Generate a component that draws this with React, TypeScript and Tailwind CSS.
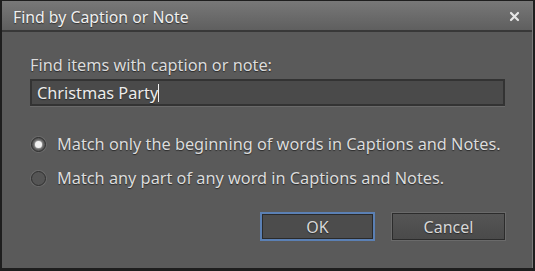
const Radio: React.FC<{ checked?: boolean; label: string }> = ({ checked, label }) => (
  <div className="flex items-center gap-[11px] h-[20px]">
    <span className="w-[15px] h-[15px] rounded-full border border-[#2e2e2e] bg-[#555555] flex items-center justify-center shadow-[0_0_0_1px_#6a6a6a]">
      {checked && (
        <span className="w-[7px] h-[7px] rounded-full bg-[#f2f2f2] shadow-[0_0_2px_1px_rgba(255,255,255,0.5)]" />
      )}
    </span>
    <span className="text-[#dcdcdc] leading-[20px] [text-shadow:0_1px_1px_#2a2a2a]">{label}</span>
  </div>
);

export default function App() {
  return (
    <div
      className="w-[535px] h-[271px] bg-[#1e1e1e] pl-[2px] pr-[2px] pt-[1px] pb-[3px] text-[16.3px]"
      style={{ fontFamily: '"Noto Sans", "Open Sans", sans-serif' }}
    >
      <div className="w-full h-full flex flex-col border-r border-[#7a7a7a]">
        {/* title bar */}
        <div className="h-[31px] flex items-center justify-between pl-[11px] pr-[12px] bg-gradient-to-b from-[#787878] to-[#5f5f5f] border-b-2 border-[#383838]">
          <span className="text-[#f0f0f0] text-[15.8px] leading-[20px] mt-[2px] [text-shadow:0_1px_1px_#333]">Find by Caption or Note</span>
          <svg width="11" height="11" viewBox="0 0 11 11" className="mt-[2px]">
            <path d="M2 2 L9 9 M9 2 L2 9" stroke="#e6e6e6" strokeWidth="2.2" strokeLinecap="round" />
          </svg>
        </div>

        {/* body */}
        <div className="flex-1 bg-[#5a5a5a] flex flex-col pl-[28px] pr-[27px] pt-[22px]">
          <div className="text-[#dcdcdc] leading-[22px] [text-shadow:0_1px_1px_#2a2a2a]">Find items with caption or note:</div>
          <div className="mt-[3px] h-[27px] border-2 border-[#333333] bg-[#4a4a4a] flex items-center pl-[5px] shadow-[0_1px_0_#6a6a6a]">
            <span className="text-[#ececec] leading-[20px] [text-shadow:0_1px_1px_#2a2a2a]">Christmas Party</span>
            <span className="w-[1px] h-[18px] bg-[#f0f0f0]" />
          </div>

          <div className="mt-[28px] flex flex-col gap-[14px] pl-[1px]">
            <Radio checked label="Match only the beginning of words in Captions and Notes." />
            <Radio label="Match any part of any word in Captions and Notes." />
          </div>

          <div className="mt-[24px] flex justify-end gap-[17px]">
            <button className="w-[115px] h-[29px] border-2 border-[#5b80b4] bg-[#4c4c4c] shadow-[inset_0_0_0_1px_#2a2a2a] text-[#d8d8d8] text-[16px] leading-[20px] [text-shadow:0_1px_1px_#2a2a2a]">
              OK
            </button>
            <button className="w-[113px] h-[27px] mt-[1px] border border-[#2c2c2c] bg-gradient-to-b from-[#555555] to-[#4a4a4a] shadow-[0_0_0_1px_#6a6a6a] text-[#d8d8d8] text-[16px] leading-[20px] [text-shadow:0_1px_1px_#2a2a2a]">
              Cancel
            </button>
          </div>
        </div>
      </div>
    </div>
  );
}
